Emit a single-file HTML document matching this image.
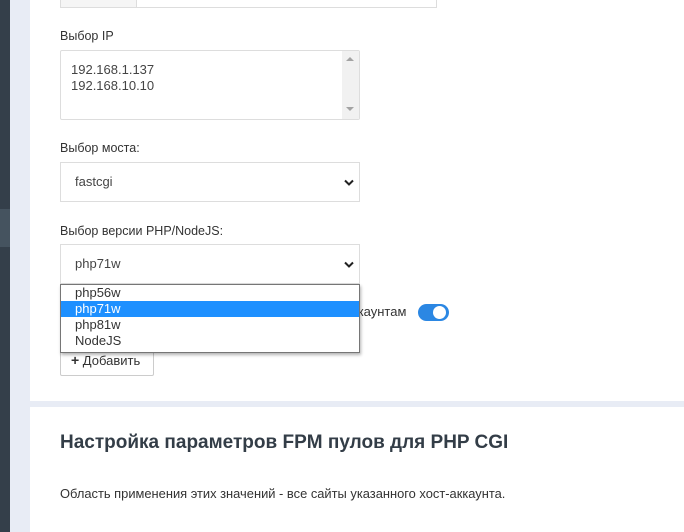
<!DOCTYPE html>
<html><head><meta charset="utf-8"><style>
*{box-sizing:border-box;margin:0;padding:0}
body{width:684px;height:532px;overflow:hidden;background:#e8ecf5;font-family:"Liberation Sans",sans-serif;position:relative;color:#333}
.a{position:absolute;white-space:nowrap}
.lbl{font-size:12.5px;color:#333}
</style></head><body>
<div class="a" style="left:0;top:0;width:10px;height:532px;background:#343f4a"></div>
<div class="a" style="left:0;top:209px;width:10px;height:38px;background:#45535f"></div>
<div class="a" style="left:30px;top:0;width:654px;height:401px;background:#fff"></div>
<div class="a" style="left:30px;top:407px;width:654px;height:125px;background:#fff"></div>

<div class="a" style="left:60px;top:-2px;width:377px;height:10px;border:1px solid #ddd;background:#fff"></div>
<div class="a" style="left:61px;top:-1px;width:76px;height:8px;background:#f5f5f5;border-right:1px solid #ddd"></div>

<div class="a lbl" style="left:60px;top:29px">Выбор IP</div>
<div class="a" style="left:60px;top:50px;width:300px;height:70px;border:1px solid #ddd;border-radius:2px"></div>
<div class="a" style="left:342px;top:51px;width:17px;height:68px;background:#f1f1f1"></div>
<div class="a" style="left:346px;top:57px;width:0;height:0;border-left:4px solid transparent;border-right:4px solid transparent;border-bottom:4px solid #a3a3a3"></div>
<div class="a" style="left:346px;top:107px;width:0;height:0;border-left:4px solid transparent;border-right:4px solid transparent;border-top:4px solid #a3a3a3"></div>
<div class="a" style="left:71px;top:62px;font-size:13px;line-height:16px;color:#444">192.168.1.137<br>192.168.10.10</div>

<div class="a lbl" style="left:60px;top:141px">Выбор моста:</div>
<div class="a" style="left:60px;top:162px;width:300px;height:40px;border:1px solid #ddd"></div>
<div class="a" style="left:75px;top:174px;font-size:13px;color:#444">fastcgi</div>
<svg class="a" style="left:344px;top:179px" width="10" height="7" viewBox="0 0 10 7"><path d="M1 1.5l4 4 4-4" stroke="#222" stroke-width="2" fill="none"/></svg>

<div class="a lbl" style="left:60px;top:224px">Выбор версии PHP/NodeJS:</div>
<div class="a" style="left:60px;top:244px;width:300px;height:40px;border:1px solid #ddd"></div>
<div class="a" style="left:75px;top:256px;font-size:13px;color:#444">php71w</div>
<svg class="a" style="left:344px;top:261px" width="10" height="7" viewBox="0 0 10 7"><path d="M1 1.5l4 4 4-4" stroke="#222" stroke-width="2" fill="none"/></svg>

<div class="a" style="left:352px;top:304px;font-size:13px;color:#333">ккаунтам</div>
<div class="a" style="left:418px;top:304px;width:31px;height:17px;border-radius:9px;background:#2b87e3"></div>
<div class="a" style="left:433px;top:306px;width:13px;height:13px;border-radius:50%;background:#fff"></div>

<div class="a" style="left:60px;top:345px;width:94px;height:31px;border:1px solid #ccc;border-radius:2px;font-size:13px;padding:6px 0 0 10px;color:#333"><b style="font-size:14px">+</b> Добавить</div>

<div class="a" style="left:60px;top:284px;width:300px;height:69px;border:1px solid #767676;background:#fff;box-shadow:1px 2px 3px rgba(0,0,0,.3);font-size:13px;line-height:16px;color:#333">
<div style="padding-left:14px">php56w</div>
<div style="padding-left:14px;background:#1e90ff;color:#fff">php71w</div>
<div style="padding-left:14px">php81w</div>
<div style="padding-left:14px">NodeJS</div>
</div>

<div class="a" style="left:60px;top:432px;font-size:19px;font-weight:bold;color:#333d47">Настройка параметров FPM пулов для PHP CGI</div>
<div class="a" style="left:60px;top:486px;font-size:12.9px;color:#333">Область применения этих значений - все сайты указанного хост-аккаунта.</div>
</body></html>
